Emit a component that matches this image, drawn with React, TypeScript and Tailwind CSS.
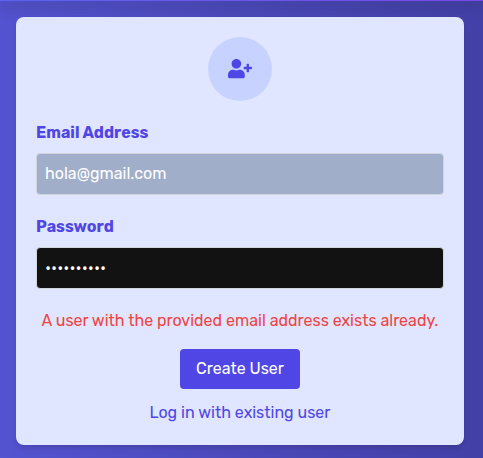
import { FaUserPlus } from "react-icons/fa";

const inputClass =
  "block h-[42px] w-full rounded border border-gray-300 px-2 pt-0 pb-px text-base text-white outline-none";

export default function App() {
  return (
    <div className="flex h-[458px] w-[483px] flex-col overflow-hidden bg-linear-to-r from-[#5453d0] to-[#4340a7] font-['Rubik',Roboto,sans-serif] text-base">
      <header className="h-px shrink-0 bg-linear-to-r from-[#5b63ee] to-[#7847e5] shadow-[0_4px_14px_2px_rgba(35,35,70,0.35)]" />
      <main className="px-4 pt-4">
        <form
          className="flex w-[448px] flex-col rounded-lg bg-[#e0e6ff] p-5 shadow-[0_4px_6px_-1px_rgba(0,0,0,0.1),0_2px_4px_-1px_rgba(0,0,0,0.06)]"
          onSubmit={(event) => event.preventDefault()}
        >
          <div className="flex size-16 items-center justify-center self-center rounded-full bg-[#c7d2fe] text-[#4f46e5]">
            <FaUserPlus className="h-[19.2px] w-6" />
          </div>
          <label htmlFor="email" className="mt-5 mb-2 font-bold text-[#4f46e5]">
            Email Address
          </label>
          <input
            id="email"
            type="email"
            defaultValue="hola@gmail.com"
            className={inputClass + " bg-[#a0aeca]"}
          />
          <label htmlFor="password" className="mt-5 mb-2 font-bold text-[#4f46e5]">
            Password
          </label>
          <input
            id="password"
            type="password"
            defaultValue="abcdefghij"
            className={inputClass + " bg-[#121212]"}
          />
          <p className="mt-5 text-center whitespace-nowrap text-[#ef4444]">
            A user with the provided email address exists already.
          </p>
          <button
            type="submit"
            className="mt-4 h-10 w-[120px] self-center rounded bg-[#4f46e5] whitespace-nowrap text-white"
          >
            Create User
          </button>
          <a href="#login" className="mt-3 self-center text-[#4f46e5]">
            Log in with existing user
          </a>
        </form>
      </main>
    </div>
  );
}
